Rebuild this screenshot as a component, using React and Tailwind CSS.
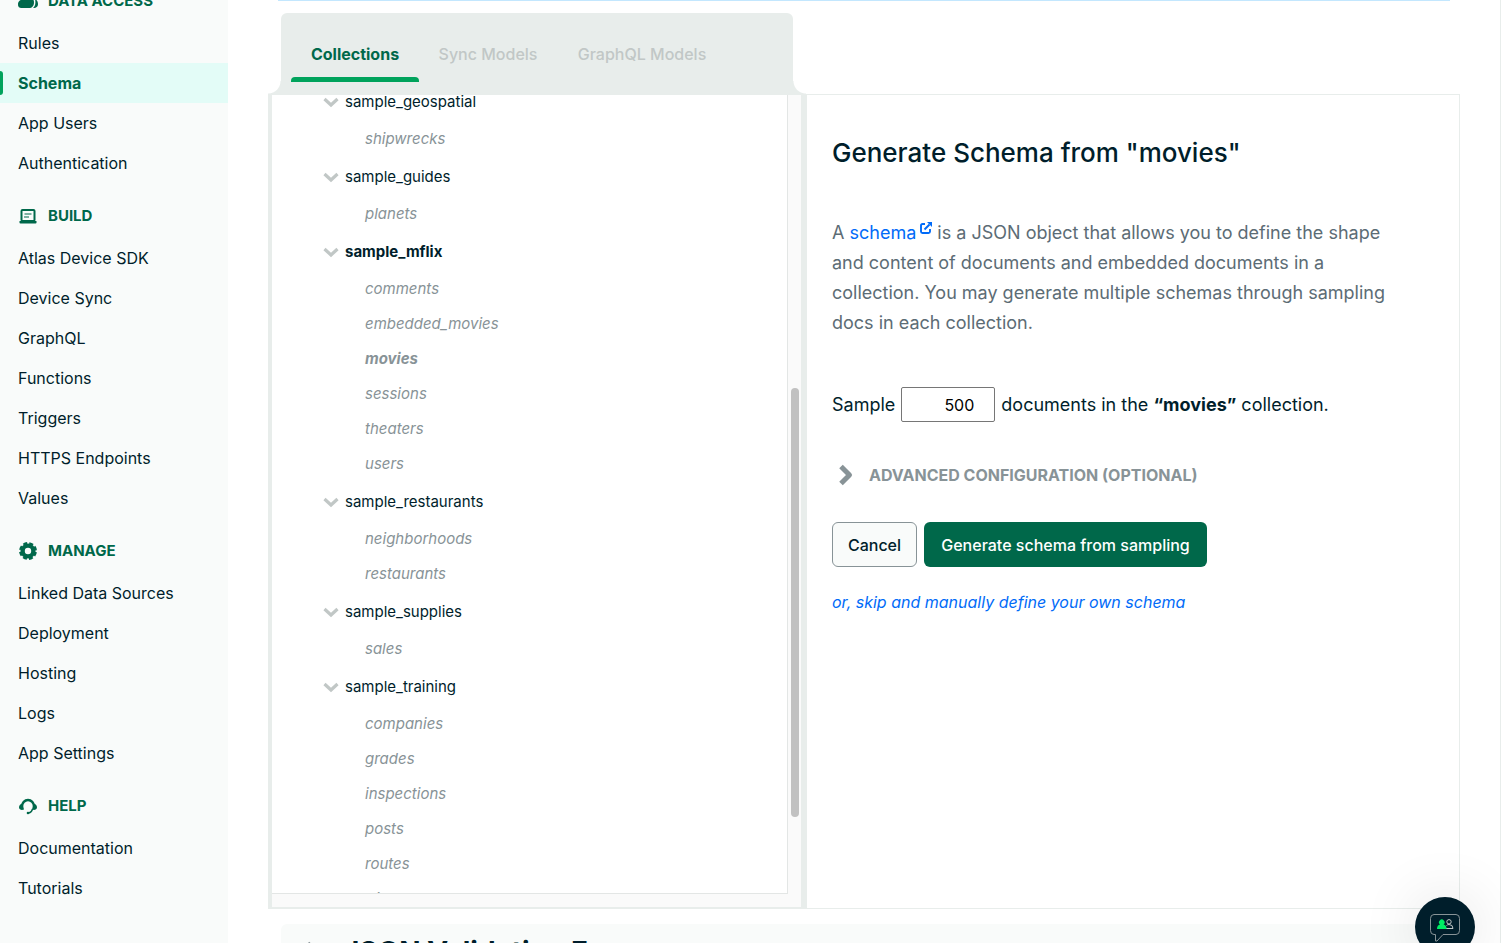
import React from "react";

const NAV = [
  { title: "DATA ACCESS", icon: "people", items: ["Rules", "Schema", "App Users", "Authentication"] },
  { title: "BUILD", icon: "laptop", items: ["Atlas Device SDK", "Device Sync", "GraphQL", "Functions", "Triggers", "HTTPS Endpoints", "Values"] },
  { title: "MANAGE", icon: "gear", items: ["Linked Data Sources", "Deployment", "Hosting", "Logs", "App Settings"] },
  { title: "HELP", icon: "support", items: ["Documentation", "Tutorials"] },
];

const TREE = [
  { name: "sample_geospatial", items: ["shipwrecks"] },
  { name: "sample_guides", items: ["planets"] },
  { name: "sample_mflix", active: true, items: ["comments", "embedded_movies", "movies", "sessions", "theaters", "users"] },
  { name: "sample_restaurants", items: ["neighborhoods", "restaurants"] },
  { name: "sample_supplies", items: ["sales"] },
  { name: "sample_training", items: ["companies", "grades", "inspections", "posts", "routes", "trips"] },
];

function NavIcon({ name }) {
  const cls = "h-5 w-5 shrink-0";
  if (name === "people")
    return (
      <svg className={cls} viewBox="0 0 20 20" fill="currentColor">
        <circle cx="9" cy="6" r="4" />
        <path d="M0 13c0-3 3-5 7-5h5c3 0 4 1 4 3 0 4-2 6-5 6H4c-3 0-4-1-4-4z" />
        <path d="M17 8c2 1 3 3 3 5s-1 4-5 4c2-2 3-4 2-9z" />
      </svg>
    );
  if (name === "laptop")
    return (
      <svg className={cls} viewBox="0 0 20 20" fill="none" stroke="currentColor">
        <rect x="3.500" y="4" width="13" height="11" rx="1" strokeWidth="2" />
        <path d="M1.500 15h17v1.800q0 .7-1 .7h-15q-1 0-1-.7z" fill="currentColor" stroke="none" />
        <path d="M6.500 8h7M6 11h5" strokeWidth="1.200" />
      </svg>
    );
  if (name === "gear")
    return (
      <svg className={cls} viewBox="0 0 20 20" fill="none" stroke="currentColor">
        <circle cx="10" cy="10" r="5.400" strokeWidth="4.400" />
        <circle cx="10" cy="10" r="7.600" strokeWidth="2.700" strokeDasharray="3.900 2.070" strokeDashoffset="-1.030" />
      </svg>
    );
  return (
    <svg className={cls} viewBox="0 0 20 20" fill="none" stroke="currentColor">
      <path d="M4 10.500a6 6.500 0 0 1 12 0" strokeWidth="2.400" />
      <path d="M4.500 7.500 6 13.500l-2 .5C2.500 14 1 13 1 11.200S2.500 8 4.500 7.500zM15.500 7.500 14 13.500l2 .5c1.500 0 3-1 3-2.800S17.500 8 15.500 7.500z" fill="currentColor" stroke="none" />
      <path d="M14.500 13c-.5 2.300-1.500 3.500-4 4.200" strokeWidth="1.300" />
      <circle cx="10" cy="17" r="1.300" fill="currentColor" stroke="none" />
    </svg>
  );
}

function Sidebar() {
  return (
    <aside className="w-[228px] shrink-0 bg-[#f9fbfa]">
      <nav className="-mt-8">
        {NAV.map((group) => (
          <section key={group.title}>
            <h2 className="flex h-[55px] items-center gap-2.5 pt-[11px] pl-[18px] text-[15px] font-bold text-[#00684a]">
              <NavIcon name={group.icon} />
              {group.title}
            </h2>
            <ul>
              {group.items.map((item) =>
                item === "Schema" ? (
                  <li key={item} className="relative bg-[#e3fcf7]">
                    <span className="absolute top-2 bottom-2 left-0 w-[3px] rounded-r bg-[#00a35c]" />
                    <a href="#schema" aria-current="page" className="flex h-10 items-center pl-[18px] text-base font-bold text-[#00684a]">
                      {item}
                    </a>
                  </li>
                ) : (
                  <li key={item}>
                    <a href="#item" className="flex h-10 items-center pl-[18px] text-base">
                      {item}
                    </a>
                  </li>
                )
              )}
            </ul>
          </section>
        ))}
      </nav>
    </aside>
  );
}

function Tabs() {
  return (
    <div className="flex items-end">
      <span className="h-[13px] w-[13px] bg-[radial-gradient(circle_at_0_0,transparent_12px,#e8edeb_13px)]" />
      <div role="tablist" className="flex h-[81px] w-[512px] items-end rounded-t-md bg-[#e8edeb] px-2.5 pb-3 text-base">
        <button role="tab" aria-selected="true" className="flex w-32 flex-col items-center gap-[11px] font-bold text-[#00684a]">
          Collections
          <span className="h-[5px] w-full rounded-t bg-[#00a35c]" />
        </button>
        <button role="tab" aria-selected="false" className="w-[138px] pb-4 font-medium text-[#c1c7c6]">
          Sync Models
        </button>
        <button role="tab" aria-selected="false" className="w-[170px] pb-4 font-medium text-[#c1c7c6]">
          GraphQL Models
        </button>
      </div>
      <span className="h-[13px] w-[13px] bg-[radial-gradient(circle_at_100%_0,transparent_12px,#e8edeb_13px)]" />
    </div>
  );
}

function CollectionTree() {
  return (
    <div className="flex w-[539px] shrink-0 border-r-6 border-b border-l-4 border-[#e8edeb] bg-[#fafafa] pb-[13px]">
      <div className="h-[799px] grow overflow-hidden border-r border-b border-[#e3e6e5] bg-white">
        <ul className="-mt-[13px]">
          {TREE.map((db) => (
            <li key={db.name}>
              <button className={db.active ? "flex h-10 w-full items-center gap-1.5 pl-[51px] text-[15px] font-bold" : "flex h-10 w-full items-center gap-1.5 pl-[51px] text-[15px]"}>
                <svg className="h-4 w-4" viewBox="0 0 16 16" fill="none" stroke="#c1c7c6" strokeWidth="3.200">
                  <path d="M1.500 5 8 11l6.500-6" />
                </svg>
                {db.name}
              </button>
              <ul>
                {db.items.map((c) => (
                  <li key={c}>
                    <a href="#collection" className={c === "movies" ? "flex h-[35px] items-center pl-[93px] text-[15px] font-bold text-[#889397] italic" : "flex h-[35px] items-center pl-[93px] text-[15px] text-[#889397] italic"}>
                      {c}
                    </a>
                  </li>
                ))}
              </ul>
            </li>
          ))}
        </ul>
      </div>
      <div className="w-[13px] shrink-0 pt-[293px] pl-[3px]">
        <div className="h-[429px] w-2 rounded bg-[#c1c1c1]" />
      </div>
    </div>
  );
}

function GeneratePanel() {
  return (
    <section className="min-w-0 grow pt-10 pr-10 pl-[25px]">
      <h1 className="text-[26px] leading-9 font-medium">Generate Schema from "movies"</h1>
      <p className="mt-[47px] max-w-[580px] text-lg leading-[30px] text-[#5c6c75]">
        A{" "}
        <a href="#schema-docs" className="text-[#016bf8]">
          schema
          <svg className="mb-3 ml-1 inline h-3 w-3" viewBox="0 0 12 12" fill="none" stroke="currentColor" strokeWidth="1.900">
            <path d="M5 2H2.500Q1 2 1 3.500v6Q1 11 2.500 11h6Q10 11 10 9.500V7M4.500 7.500l5-5" />
            <path d="M7 0h5v5z" fill="currentColor" stroke="none" />
          </svg>
        </a>{" "}
        is a JSON object that allows you to define the shape and content of documents and embedded documents in a collection. You may generate multiple schemas through sampling docs in each collection.
      </p>
      <div className="mt-[49px] flex items-center gap-1.5 text-lg">
        <label htmlFor="sample-size">Sample</label>
        <input id="sample-size" defaultValue="500" className="h-[35px] w-[94px] rounded-xs border border-[#767676] bg-white pr-5 text-right text-base text-black" />
        <span>
          documents in the <b>“movies”</b> collection.
        </span>
      </div>
      <button className="mt-[41px] flex items-center gap-[9px] pl-1 text-base font-bold text-[#889397]">
        <svg className="h-6 w-6" viewBox="0 0 24 24" fill="none" stroke="currentColor" strokeWidth="5" strokeLinejoin="round">
          <path d="M5 3.500 13.500 12 5 20.500" />
        </svg>
        ADVANCED CONFIGURATION (OPTIONAL)
      </button>
      <div className="mt-[35px] flex gap-[7px] text-base font-medium">
        <button className="h-[45px] w-[85px] rounded-md border border-[#889397] bg-[#f9fbfa]">Cancel</button>
        <button className="h-[45px] w-[283px] rounded-md bg-[#00684a] text-white">Generate schema from sampling</button>
      </div>
      <a href="#manual" className="mt-[23px] block text-base text-[#016bf8] italic">
        or, skip and manually define your own schema
      </a>
    </section>
  );
}

export default function App() {
  return (
    <div className="flex h-screen overflow-hidden bg-white font-['Inter','Liberation_Sans',sans-serif] text-[#001e2b]">
      <Sidebar />
      <main className="min-w-0 grow border-r border-[#e8edeb] px-10">
        <div className="mr-2.5 ml-2.5 h-px bg-[#c3e7fe]" />
        <div className="pt-3">
          <Tabs />
        </div>
        <div className="flex border border-l-0 border-[#e8edeb]">
          <CollectionTree />
          <GeneratePanel />
        </div>
        <section className="mt-[15px] ml-[13px] rounded-t-md bg-[#f9fbfa] pt-2.5 pl-[22px]">
          <h2 className="flex items-center gap-4 text-[28px] leading-9 font-bold">
            <svg className="h-6 w-6" viewBox="0 0 24 24" fill="none" stroke="#889397" strokeWidth="5" strokeLinejoin="round">
              <path d="M4.500 3.500 13 12 4.500 20.500" />
            </svg>
            JSON Validation Errors
          </h2>
        </section>
      </main>
      <button aria-label="Open chat" className="fixed right-[26px] -bottom-[14px] flex h-[60px] w-[60px] items-center justify-center rounded-full bg-[#001e2b] shadow-[0_0_60px_rgba(0,0,0,0.12)]">
        <svg className="h-8 w-8" viewBox="0 0 32 32" fill="none" stroke="#889397">
          <path d="M5 3.500h22q3.500 0 3.500 4v12q0 4-3.500 4H14l-6 6.500H6.500v-6.500H5q-3.500 0-3.500-4v-12q0-4 3.500-4z" />
          <path d="M17 17.500h7q0-4-4-4-1.500 0-2.500 1" stroke="#c1c7c6" />
          <circle cx="20" cy="10.800" r="2.200" stroke="#c1c7c6" />
          <path d="M8 18q0-4 3-4.500a2.800 2.800 0 1 1 3.600 0q3 .5 3 4.500z" fill="#00ed64" stroke="none" />
        </svg>
      </button>
    </div>
  );
}
